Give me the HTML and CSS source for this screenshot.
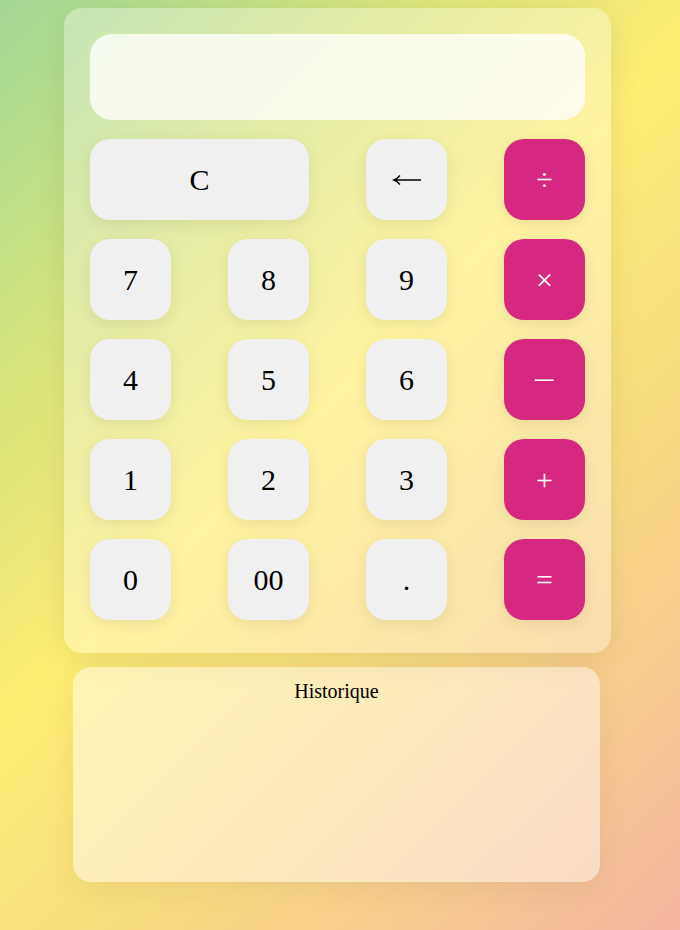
FILE: index.html
```html
<!DOCTYPE html>
<html lang="fr">
<head>
<meta charset="utf-8">
<title>Calculatrice</title>
<link rel="stylesheet" href="styles.css">
</head>
<body>
<div class="page">
  <div class="calculator">
    <div class="display"></div>
    <div class="keys">
      <button class="key wide">C</button>
      <button class="key" aria-label="Effacer"><svg class="arrow" width="30" height="12" viewBox="0 0 30 12"><path d="M2 6 H29 M8 1.5 Q5 5 2 6 Q5 7 8 10.5" fill="none" stroke="#000" stroke-width="1.4"/></svg></button>
      <button class="key op">&divide;</button>
      <button class="key">7</button>
      <button class="key">8</button>
      <button class="key">9</button>
      <button class="key op">&times;</button>
      <button class="key">4</button>
      <button class="key">5</button>
      <button class="key">6</button>
      <button class="key op"><span class="minus">&minus;</span></button>
      <button class="key">1</button>
      <button class="key">2</button>
      <button class="key">3</button>
      <button class="key op">+</button>
      <button class="key">0</button>
      <button class="key">00</button>
      <button class="key">.</button>
      <button class="key op">=</button>
    </div>
  </div>
  <div class="history">
    <div class="history-title">Historique</div>
  </div>
</div>
</body>
</html>
```
FILE: styles.css
```css
html, body {
  margin: 0;
  padding: 0;
}
body {
  width: 680px;
  height: 930px;
  overflow: hidden;
  font-family: "Liberation Serif", "Times New Roman", serif;
  background: linear-gradient(135deg, #a2d894 0%, #d8e47c 25%, #fdee74 45%, #f9d884 70%, #f4b59e 100%);
}
.page {
  display: flex;
  flex-direction: column;
  align-items: flex-start;
  padding-top: 8px;
}
.calculator {
  margin-left: 64px;
  width: 547px;
  box-sizing: border-box;
  padding: 26px 26px 33px;
  border-radius: 18px;
  background: rgba(255, 255, 255, 0.32);
  box-shadow: 0 8px 32px rgba(0, 0, 0, 0.08);
  display: flex;
  flex-direction: column;
  gap: 19px;
}
.display {
  height: 86px;
  border-radius: 22px;
  background: rgba(255, 255, 255, 0.78);
}
.keys {
  display: grid;
  grid-template-columns: repeat(4, 81px);
  grid-auto-rows: 81px;
  column-gap: 57px;
  row-gap: 19px;
}
.key {
  border: none;
  border-radius: 20px;
  background: #f0f0f0;
  color: #000;
  font-family: "Liberation Serif", "Times New Roman", serif;
  font-size: 30px;
  padding: 0;
  display: flex;
  align-items: center;
  justify-content: center;
  box-shadow: 0 4px 15px rgba(0, 0, 0, 0.08);
}
.key.wide {
  grid-column: span 2;
}
.key.op {
  background: #d62880;
  color: #fff;
}
.arrow {
  display: block;
}
.minus {
  display: inline-block;
  transform: scaleX(1.35);
}
.history {
  margin-top: 14px;
  margin-left: 73px;
  width: 527px;
  height: 215px;
  box-sizing: border-box;
  border-radius: 18px;
  background: rgba(255, 255, 255, 0.45);
  box-shadow: 0 8px 32px rgba(0, 0, 0, 0.06);
  padding-top: 13px;
}
.history-title {
  text-align: center;
  font-size: 20px;
  color: #000;
}
```
